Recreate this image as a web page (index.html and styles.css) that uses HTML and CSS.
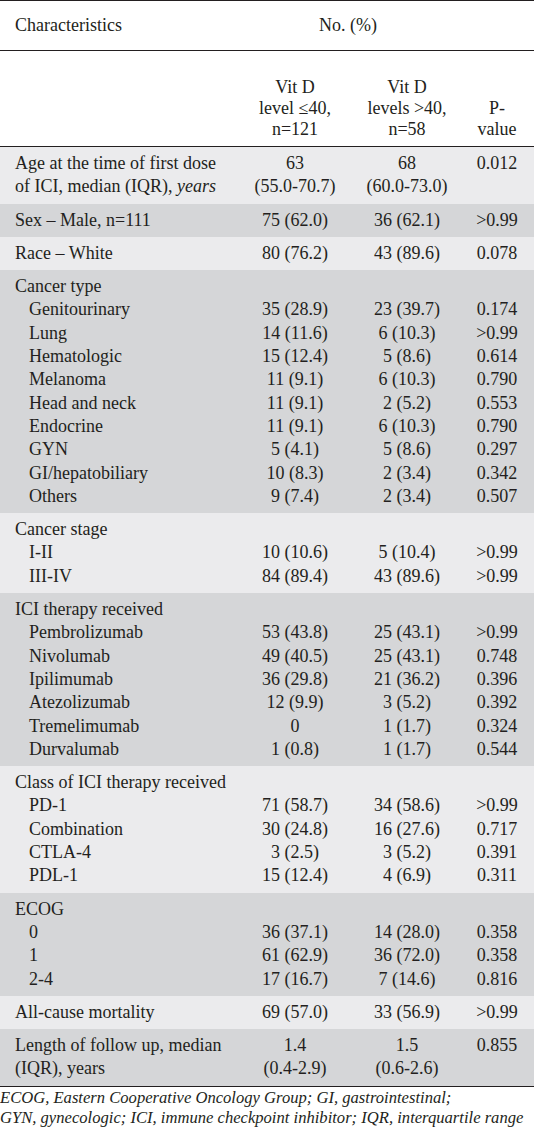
FILE: index.html
```html
<!DOCTYPE html>
<html lang="en">
<head>
  <meta charset="UTF-8">
  <meta name="viewport" content="width=device-width, initial-scale=1.0">
  <title>Baseline characteristics by vitamin D level</title>
  <link rel="stylesheet" href="styles.css">
</head>
<body>
  <table class="stats">
    <colgroup>
      <col class="col-label">
      <col class="col-low">
      <col class="col-high">
      <col class="col-p">
    </colgroup>
    <thead>
      <tr class="head-top">
        <th class="label">Characteristics</th>
        <th colspan="2">No. (%)</th>
        <th></th>
      </tr>
      <tr class="head-groups">
        <th></th>
        <th>Vit D<br>level ≤40,<br>n=121</th>
        <th>Vit D<br>levels &gt;40,<br>n=58</th>
        <th>P-<br>value</th>
      </tr>
    </thead>
    <tbody>
      <tr>
        <td class="label">Age at the time of first dose of ICI, median (IQR), <em>years</em></td>
        <td>63<br>(55.0-70.7)</td>
        <td>68<br>(60.0-73.0)</td>
        <td>0.012</td>
      </tr>
    </tbody>
    <tbody>
      <tr><td class="label">Sex – Male, n=111</td><td>75 (62.0)</td><td>36 (62.1)</td><td>&gt;0.99</td></tr>
    </tbody>
    <tbody>
      <tr><td class="label">Race – White</td><td>80 (76.2)</td><td>43 (89.6)</td><td>0.078</td></tr>
    </tbody>
    <tbody>
      <tr><td class="label">Cancer type</td><td></td><td></td><td></td></tr>
      <tr><td class="label sub">Genitourinary</td><td>35 (28.9)</td><td>23 (39.7)</td><td>0.174</td></tr>
      <tr><td class="label sub">Lung</td><td>14 (11.6)</td><td>6 (10.3)</td><td>&gt;0.99</td></tr>
      <tr><td class="label sub">Hematologic</td><td>15 (12.4)</td><td>5 (8.6)</td><td>0.614</td></tr>
      <tr><td class="label sub">Melanoma</td><td>11 (9.1)</td><td>6 (10.3)</td><td>0.790</td></tr>
      <tr><td class="label sub">Head and neck</td><td>11 (9.1)</td><td>2 (5.2)</td><td>0.553</td></tr>
      <tr><td class="label sub">Endocrine</td><td>11 (9.1)</td><td>6 (10.3)</td><td>0.790</td></tr>
      <tr><td class="label sub">GYN</td><td>5 (4.1)</td><td>5 (8.6)</td><td>0.297</td></tr>
      <tr><td class="label sub">GI/hepatobiliary</td><td>10 (8.3)</td><td>2 (3.4)</td><td>0.342</td></tr>
      <tr><td class="label sub">Others</td><td>9 (7.4)</td><td>2 (3.4)</td><td>0.507</td></tr>
    </tbody>
    <tbody>
      <tr><td class="label">Cancer stage</td><td></td><td></td><td></td></tr>
      <tr><td class="label sub">I-II</td><td>10 (10.6)</td><td>5 (10.4)</td><td>&gt;0.99</td></tr>
      <tr><td class="label sub">III-IV</td><td>84 (89.4)</td><td>43 (89.6)</td><td>&gt;0.99</td></tr>
    </tbody>
    <tbody>
      <tr><td class="label">ICI therapy received</td><td></td><td></td><td></td></tr>
      <tr><td class="label sub">Pembrolizumab</td><td>53 (43.8)</td><td>25 (43.1)</td><td>&gt;0.99</td></tr>
      <tr><td class="label sub">Nivolumab</td><td>49 (40.5)</td><td>25 (43.1)</td><td>0.748</td></tr>
      <tr><td class="label sub">Ipilimumab</td><td>36 (29.8)</td><td>21 (36.2)</td><td>0.396</td></tr>
      <tr><td class="label sub">Atezolizumab</td><td>12 (9.9)</td><td>3 (5.2)</td><td>0.392</td></tr>
      <tr><td class="label sub">Tremelimumab</td><td>0</td><td>1 (1.7)</td><td>0.324</td></tr>
      <tr><td class="label sub">Durvalumab</td><td>1 (0.8)</td><td>1 (1.7)</td><td>0.544</td></tr>
    </tbody>
    <tbody>
      <tr><td class="label">Class of ICI therapy received</td><td></td><td></td><td></td></tr>
      <tr><td class="label sub">PD-1</td><td>71 (58.7)</td><td>34 (58.6)</td><td>&gt;0.99</td></tr>
      <tr><td class="label sub">Combination</td><td>30 (24.8)</td><td>16 (27.6)</td><td>0.717</td></tr>
      <tr><td class="label sub">CTLA-4</td><td>3 (2.5)</td><td>3 (5.2)</td><td>0.391</td></tr>
      <tr><td class="label sub">PDL-1</td><td>15 (12.4)</td><td>4 (6.9)</td><td>0.311</td></tr>
    </tbody>
    <tbody>
      <tr><td class="label">ECOG</td><td></td><td></td><td></td></tr>
      <tr><td class="label sub">0</td><td>36 (37.1)</td><td>14 (28.0)</td><td>0.358</td></tr>
      <tr><td class="label sub">1</td><td>61 (62.9)</td><td>36 (72.0)</td><td>0.358</td></tr>
      <tr><td class="label sub">2-4</td><td>17 (16.7)</td><td>7 (14.6)</td><td>0.816</td></tr>
    </tbody>
    <tbody>
      <tr><td class="label">All-cause mortality</td><td>69 (57.0)</td><td>33 (56.9)</td><td>&gt;0.99</td></tr>
    </tbody>
    <tbody>
      <tr>
        <td class="label">Length of follow up, median (IQR), years</td>
        <td>1.4<br>(0.4-2.9)</td>
        <td>1.5<br>(0.6-2.6)</td>
        <td>0.855</td>
      </tr>
    </tbody>
  </table>
  <p class="footnote">ECOG, Eastern Cooperative Oncology Group; GI, gastrointestinal;<br>GYN, gynecologic; ICI, immune checkpoint inhibitor; IQR, interquartile range</p>
</body>
</html>
```

FILE: styles.css
```css
body {
  margin: 0;
  padding: 0;
  background: #fff;
  color: #231f20;
  font-family: "Liberation Serif", "Times New Roman", serif;
}
.stats {
  width: 534px;
  table-layout: fixed;
  border-collapse: collapse;
  font-size: 18px;
  line-height: 23.3px;
}
.col-label { width: 236px; }
.col-low { width: 118px; }
.col-high { width: 106px; }
.col-p { width: 74px; }

.stats th {
  font-weight: normal;
  text-align: center;
  padding: 0 6px;
}
.stats td {
  text-align: center;
  vertical-align: top;
  padding: 0 6px;
}
.stats .label {
  text-align: left;
  padding-left: 15px;
  padding-right: 10px;
}
.stats .label.sub {
  padding-left: 29px;
}

/* header rules */
.head-top th {
  height: 49px;
  border-top: 1.5px solid #231f20;
  border-bottom: 1px solid #231f20;
  vertical-align: middle;
}
.head-groups th {
  height: 89px;
  line-height: 21px;
  vertical-align: bottom;
  padding-bottom: 6px;
  border-bottom: 1.5px solid #231f20;
}

/* shaded row groups */
.stats tbody:nth-of-type(odd) td { background: #ebebed; }
.stats tbody:nth-of-type(even) td { background: #d5d6d8; }
.stats tbody tr:first-child td { padding-top: 5px; }
.stats tbody tr:last-child td { padding-bottom: 5px; }
.stats tbody:last-of-type tr:last-child td {
  border-bottom: 1.5px solid #231f20;
}

.footnote {
  margin: 0;
  padding-top: 1px;
  font-size: 16.6px;
  line-height: 20px;
  font-style: italic;
  white-space: nowrap;
}
```
